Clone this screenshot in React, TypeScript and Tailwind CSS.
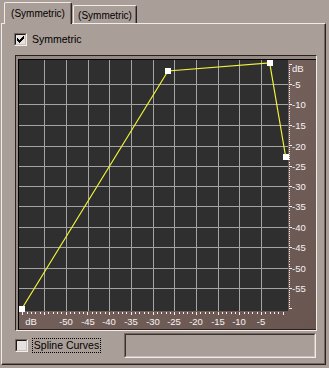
import React from "react";

function Check() {
  const cols = [2, 3, 4, 3, 2, 1, 0];
  const d = cols.map((t, i) => `M${i} ${t}h1v3h-1z`).join(" ");
  return (
    <svg width="7" height="7" viewBox="0 0 7 7" shapeRendering="crispEdges">
      <path d={d} fill="#000" />
    </svg>
  );
}

function Checkbox({ checked }: { checked?: boolean }) {
  return (
    <div className="w-[13px] h-[13px] shrink-0 border border-t-[#746864] border-l-[#746864] border-b-[#f4eeeb] border-r-[#f4eeeb]">
      <div className="w-full h-full border border-t-[#1e1715] border-l-[#1e1715] border-b-[#cbc1bc] border-r-[#cbc1bc] bg-[#e6e1de] flex items-center justify-center">
        {checked && <Check />}
      </div>
    </div>
  );
}

function Chart() {
  const vx = [44, 66, 88, 109, 131, 153, 174, 196, 218, 239, 261];
  const hy = [84, 104, 125, 146, 166, 186, 206, 227, 247, 268, 288];
  const ticksR = Array.from({ length: 121 }, (_, d) => ({
    y: Math.round(63.6 + 2.04 * d),
    major: d % 10 === 0,
  }));
  const ticksB = Array.from({ length: 61 }, (_, d) => ({
    x: Math.round(282.7 - 4.34 * d),
    major: d % 5 === 0,
  }));
  const rLabels = ["-5", "-10", "-15", "-20", "-25", "-30", "-35", "-40", "-45", "-50", "-55"];
  const bLabels = ["-50", "-45", "-40", "-35", "-30", "-25", "-20", "-15", "-10", "-5"];
  const pts: [number, number][] = [
    [22, 308.5],
    [168, 71],
    [269.7, 63],
    [285.7, 157],
  ];
  const font = "'Liberation Sans', Arial, sans-serif";
  return (
    <svg
      width={297}
      height={269}
      viewBox="19 60 297 269"
      className="block"
      shapeRendering="crispEdges"
    >
      <defs>
        <linearGradient id="brn" x1="0" y1="0" x2="1" y2="1">
          <stop offset="0" stopColor="#7b6863" />
          <stop offset="1" stopColor="#6a5651" />
        </linearGradient>
      </defs>
      <rect x={19} y={60} width={297} height={269} fill="url(#brn)" />
      <rect x={19} y={60} width={269} height={251} fill="#2f2f2f" />
      {vx.map((x) => (
        <rect key={"v" + x} x={x} y={60} width={1} height={251} fill="#a4a4a4" />
      ))}
      {hy.map((y) => (
        <rect key={"h" + y} x={19} y={y} width={269} height={1} fill="#a4a4a4" />
      ))}
      {ticksR.map((t, i) => (
        <rect key={"tr" + i} x={289} y={t.y} width={t.major ? 3 : 1} height={1} fill="#f4f0f0" />
      ))}
      {ticksB.map((t, i) => (
        <rect key={"tb" + i} x={t.x} y={312} width={1} height={t.major ? 3 : 2} fill="#f4f0f0" />
      ))}
      <polyline
        points={pts.map((p) => p.join(",")).join(" ")}
        fill="none"
        stroke="#f2f23a"
        strokeWidth={1.2}
        shapeRendering="auto"
      />
      {pts.map((p, i) => (
        <rect key={"p" + i} x={Math.round(p[0] - 3)} y={Math.round(p[1] - 3)} width={6} height={6} fill="#ffffff" />
      ))}
      <g fontFamily={font} fontSize={9.5} fill="#f6f2f2">
        <text x={292} y={71.5}>dB</text>
        {rLabels.map((l, i) => (
          <text key={"rl" + i} x={292} y={hy[i] + 3.5}>
            {l}
          </text>
        ))}
        <text x={31} y={324.5} textAnchor="middle">dB</text>
        {bLabels.map((l, i) => (
          <text key={"bl" + i} x={vx[i + 1]} y={324.5} textAnchor="middle">
            {l}
          </text>
        ))}
      </g>
    </svg>
  );
}

export default function App() {
  return (
    <div className="w-[329px] h-[368px] bg-[#aa9e98] overflow-hidden font-['Liberation_Sans',Arial,sans-serif] text-black select-none">
      {/* tabs */}
      <div className="h-[23px] flex items-end pl-[4px]">
        <div className="relative z-10 -mb-px h-[22px] w-[68px] bg-[#aa9e98] border-l border-t border-r border-l-[#f2ece8] border-t-[#f2ece8] border-r-[#2b2220] rounded-t-[2px] shadow-[inset_-1px_0_0_#746864] flex items-center justify-center text-[10px] leading-none">
          (Symmetric)
        </div>
        <div className="ml-px h-[18px] w-[64px] border-l border-t border-r border-l-[#f2ece8] border-t-[#f2ece8] border-r-[#2b2220] rounded-t-[2px] shadow-[inset_-1px_0_0_#746864] flex items-center justify-center pt-[3px] text-[10px] leading-none">
          (Symmetric)
        </div>
      </div>
      {/* panel */}
      <div className="ml-px w-[325px] h-[342px] border border-l-[#f2ece8] border-t-[#f2ece8] border-r-[#2b2220] border-b-[#2b2220] shadow-[inset_-1px_-1px_0_#746864] flex flex-col">
        <div className="mt-[9px] ml-[12px] h-[13px] flex items-center">
          <Checkbox checked />
          <span className="ml-[5px] text-[10.5px] leading-none">Symmetric</span>
        </div>
        <div className="mt-[9px] ml-[13px] w-[302px] h-[276px] border border-t-[#2b2220] border-l-[#2b2220] border-r-[#f2ece8] border-b-[#f2ece8] bg-[#958984] pl-[2px] pt-[3px] flex">
          <div className="flex-1 border-t border-l border-b border-t-black border-l-black border-b-[#2b2220] flex">
            <Chart />
          </div>
        </div>
        <div className="mt-[2px] ml-[13px] h-[25px] flex items-center">
          <Checkbox />
          <span className="ml-[4px] h-[15px] w-[69px] border border-dotted border-black flex items-center justify-center text-[10.5px] leading-none">
            Spline Curves
          </span>
          <div className="ml-[23px] w-[192px] h-[25px] border border-t-[#746864] border-l-[#746864] border-b-[#f2ece8] border-r-[#f2ece8]">
            <div className="w-full h-full border border-t-[#3a2f2c] border-l-[#3a2f2c] border-b-[#c9beb9] border-r-[#c9beb9]" />
          </div>
        </div>
      </div>
    </div>
  );
}
